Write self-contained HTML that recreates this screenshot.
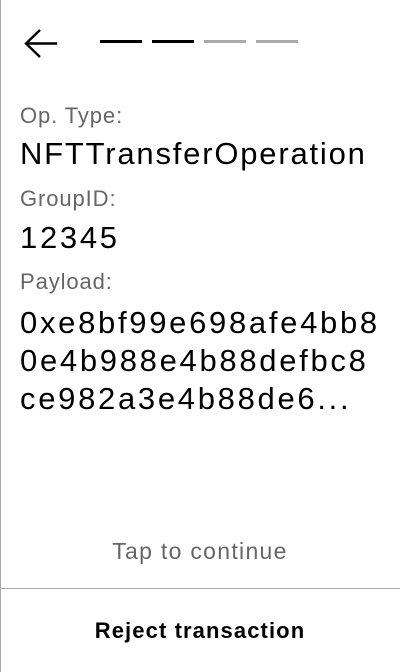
<!DOCTYPE html>
<html><head><meta charset="utf-8"><style>
html,body{margin:0;padding:0;background:#fff;}
body{width:400px;height:672px;position:relative;overflow:hidden;font-family:"Liberation Sans",sans-serif;}
.lb{position:absolute;left:0;top:0;width:1px;height:672px;background:#a8a8a8;}
.t{position:absolute;left:20px;height:40px;line-height:40px;white-space:nowrap;}
.lab{font-size:22px;color:#666;letter-spacing:0.9px;}
.val{font-size:31px;color:#000;letter-spacing:2.7px;}
.d{position:absolute;top:40px;height:3px;width:42px;}
</style></head><body>
<div class="lb"></div>
<svg style="position:absolute;left:22px;top:28px" width="38" height="32" viewBox="0 0 38 32">
<path d="M4 15.5 H35 M18 2 L4 15.5 L18 29" fill="none" stroke="#000" stroke-width="2.4"/>
</svg>
<div class="d" style="left:100px;background:#000"></div>
<div class="d" style="left:152px;background:#000"></div>
<div class="d" style="left:204px;background:#aaa"></div>
<div class="d" style="left:256px;background:#aaa"></div>
<div class="t lab" style="top:96px">Op. Type:</div>
<div class="t val" style="top:134px;letter-spacing:1.8px">NFTTransferOperation</div>
<div class="t lab" style="top:179px">GroupID:</div>
<div class="t val" style="top:218px">12345</div>
<div class="t lab" style="top:262px">Payload:</div>
<div class="t val" style="top:303px">0xe8bf99e698afe4bb8</div>
<div class="t val" style="top:341px">0e4b988e4b88defbc8</div>
<div class="t val" style="top:379px">ce982a3e4b88de6...</div>
<div style="position:absolute;left:0;width:400px;top:531px;line-height:40px;text-align:center;font-size:23px;color:#666;letter-spacing:1.3px">Tap to continue</div>
<div style="position:absolute;left:0;top:588px;width:400px;height:1px;background:#a8a8a8"></div>
<div style="position:absolute;left:0;width:400px;top:611px;line-height:40px;text-align:center;font-size:22px;font-weight:bold;color:#000;letter-spacing:1.1px">Reject transaction</div>
</body></html>
